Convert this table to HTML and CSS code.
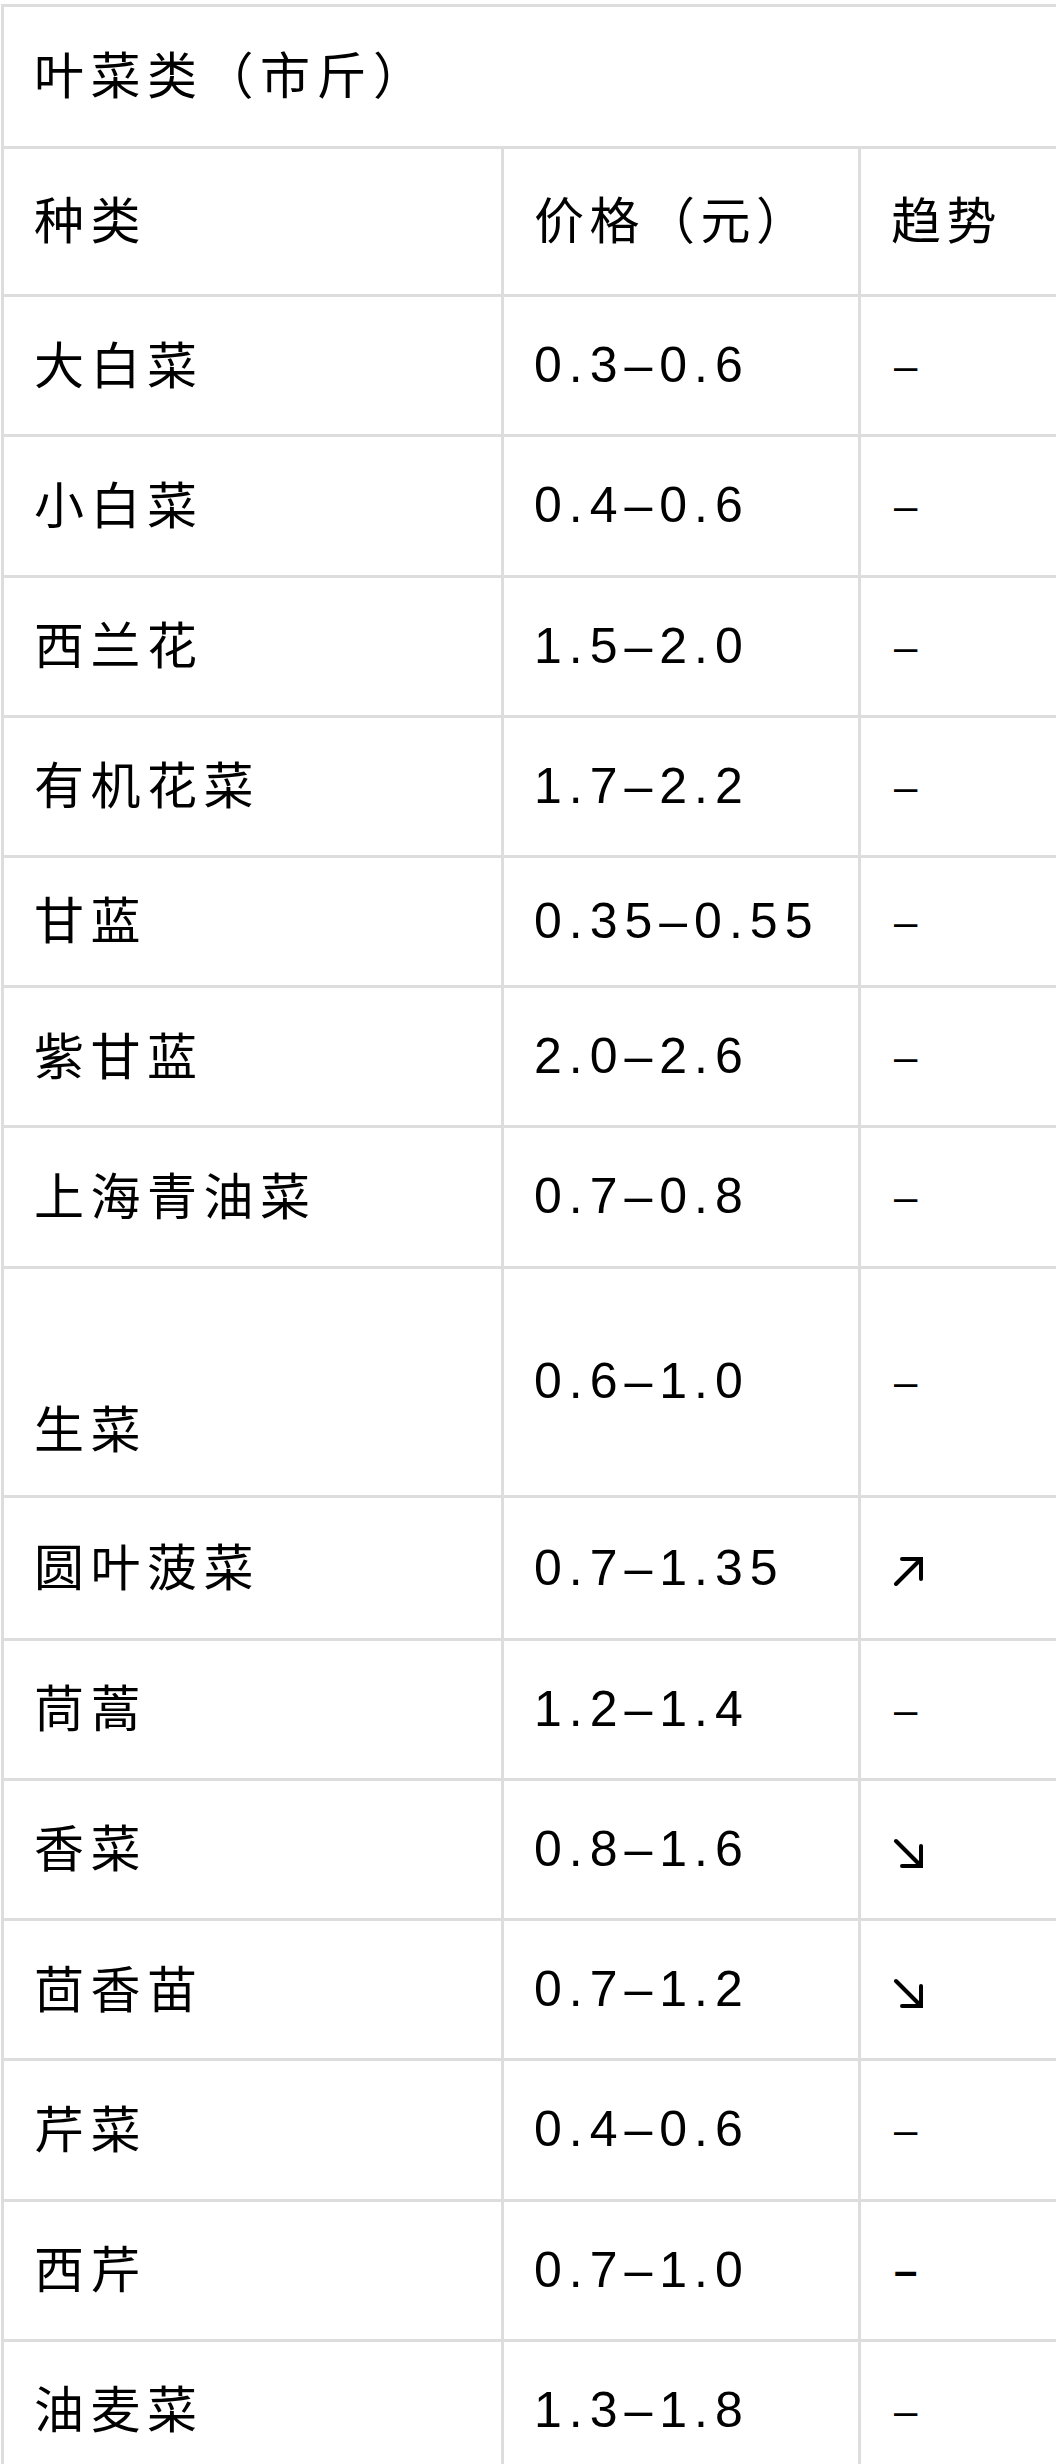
FILE: index.html
```html
<!DOCTYPE html>
<html lang="zh-CN">
<head>
<meta charset="utf-8">
<title>叶菜类价格</title>
<link rel="stylesheet" href="styles.css">
</head>
<body>
<div class="viewport">
  <table class="prices">
    <colgroup>
      <col class="col-name">
      <col class="col-price">
      <col class="col-trend">
    </colgroup>
    <tbody>
      <tr class="title"><td colspan="3" class="name">叶菜类（市斤）</td></tr>
      <tr class="head"><td class="name">种类</td><td class="price">价格（元）</td><td class="trend">趋势</td></tr>
      <tr><td class="name">大白菜</td><td class="price">0.3–0.6</td><td class="trend"><span class="dash">–</span></td></tr>
      <tr><td class="name">小白菜</td><td class="price">0.4–0.6</td><td class="trend"><span class="dash">–</span></td></tr>
      <tr><td class="name">西兰花</td><td class="price">1.5–2.0</td><td class="trend"><span class="dash">–</span></td></tr>
      <tr><td class="name">有机花菜</td><td class="price">1.7–2.2</td><td class="trend"><span class="dash">–</span></td></tr>
      <tr class="short"><td class="name">甘蓝</td><td class="price">0.35–0.55</td><td class="trend"><span class="dash">–</span></td></tr>
      <tr><td class="name">紫甘蓝</td><td class="price">2.0–2.6</td><td class="trend"><span class="dash">–</span></td></tr>
      <tr><td class="name">上海青油菜</td><td class="price">0.7–0.8</td><td class="trend"><span class="dash">–</span></td></tr>
      <tr><td class="name"><br>生菜</td><td class="price">0.6–1.0</td><td class="trend"><span class="dash">–</span></td></tr>
      <tr class="tall"><td class="name">圆叶菠菜</td><td class="price">0.7–1.35</td><td class="trend"><svg class="arrow" viewBox="0 0 30 30" width="30" height="30"><path d="M3 28 L28 3"/><path d="M9 3 H28 V23"/></svg></td></tr>
      <tr><td class="name">茼蒿</td><td class="price">1.2–1.4</td><td class="trend"><span class="dash">–</span></td></tr>
      <tr><td class="name">香菜</td><td class="price">0.8–1.6</td><td class="trend"><svg class="arrow" viewBox="0 0 30 30" width="30" height="30"><path d="M3 3 L28 28"/><path d="M28 8 V28 H9"/></svg></td></tr>
      <tr><td class="name">茴香苗</td><td class="price">0.7–1.2</td><td class="trend"><svg class="arrow" viewBox="0 0 30 30" width="30" height="30"><path d="M3 3 L28 28"/><path d="M28 8 V28 H9"/></svg></td></tr>
      <tr><td class="name">芹菜</td><td class="price">0.4–0.6</td><td class="trend"><span class="dash">–</span></td></tr>
      <tr><td class="name">西芹</td><td class="price">0.7–1.0</td><td class="trend"><span class="dash bold">–</span></td></tr>
      <tr><td class="name">油麦菜</td><td class="price">1.3–1.8</td><td class="trend"><span class="dash">–</span></td></tr>
    </tbody>
  </table>
</div>
</body>
</html>
```

FILE: styles.css
```css
html, body {
  margin: 0;
  padding: 0;
  background: #ffffff;
}

body {
  font-family: "Liberation Sans", "Noto Sans CJK SC", sans-serif;
  font-size: 50px;
  color: #000000;
}

.viewport {
  width: 1056px;
  overflow: hidden;
  padding: 4px 0 0 1px;
  box-sizing: border-box;
}

.prices {
  table-layout: fixed;
  width: 1160px;
  border-collapse: separate;
  border-spacing: 0;
  border-top: 3px solid #dddddd;
  border-left: 3px solid #dddddd;
}

.col-name { width: 500px; }
.col-price { width: 357px; }
.col-trend { width: 300px; }

.prices td {
  border-right: 3px solid #dddddd;
  border-bottom: 3px solid #dddddd;
  padding: 17px 30px;
  line-height: 103.25px;
  vertical-align: middle;
  white-space: nowrap;
  text-align: left;
}

.prices td.name {
  line-height: 96px;
  letter-spacing: 6.5px;
  font-family: "Noto Sans CJK SC", sans-serif;
}

.prices td.price {
  letter-spacing: 7px;
}

.prices td.trend {
  letter-spacing: 6.5px;
}

/* CJK glyphs sit slightly low in their line box: lift them a little */
.prices td.name,
.prices tr.head td {
  padding-top: 13px;
  padding-bottom: 21px;
}

.prices tr.title td { line-height: 105px; }
.prices tr.head td { line-height: 111px; }
.prices tr.short td { line-height: 93px; }
.prices tr.tall td { line-height: 106px; }

.prices tr.head .price,
.prices tr.head .trend {
  font-family: "Noto Sans CJK SC", sans-serif;
  letter-spacing: 5.5px;
}

.dash {
  margin-left: 3px;
  font-size: 42px;
  line-height: 1;
  vertical-align: 2px;
}

.dash.bold {
  font-weight: bold;
}

.arrow {
  display: inline-block;
  vertical-align: middle;
  margin-left: 2px;
  fill: none;
  stroke: #000000;
  stroke-width: 4;
  stroke-linecap: round;
  stroke-linejoin: miter;
}
```
